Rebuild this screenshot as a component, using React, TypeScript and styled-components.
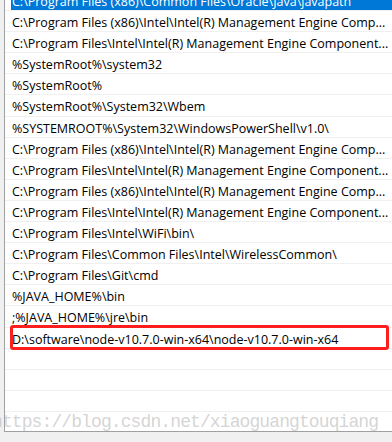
import React from 'react';
import styled, {createGlobalStyle} from "styled-components";

const paths = [
    "C:\\Program Files (x86)\\Common Files\\Oracle\\Java\\javapath",
    "C:\\Program Files (x86)\\Intel\\Intel(R) Management Engine Comp...",
    "C:\\Program Files\\Intel\\Intel(R) Management Engine Component...",
    "%SystemRoot%\\system32",
    "%SystemRoot%",
    "%SystemRoot%\\System32\\Wbem",
    "%SYSTEMROOT%\\System32\\WindowsPowerShell\\v1.0\\",
    "C:\\Program Files (x86)\\Intel\\Intel(R) Management Engine Comp...",
    "C:\\Program Files\\Intel\\Intel(R) Management Engine Component...",
    "C:\\Program Files (x86)\\Intel\\Intel(R) Management Engine Comp...",
    "C:\\Program Files\\Intel\\Intel(R) Management Engine Component...",
    "C:\\Program Files\\Intel\\WiFi\\bin\\",
    "C:\\Program Files\\Common Files\\Intel\\WirelessCommon\\",
    "C:\\Program Files\\Git\\cmd",
    "%JAVA_HOME%\\bin",
    ";%JAVA_HOME%\\jre\\bin",
    "D:\\software\\node-v10.7.0-win-x64\\node-v10.7.0-win-x64",
    "",
    "",
    "",
    "",
];

export default function App() {
    return (
        <>
            <GlobalStyle/>
            <Frame>
                <ListBox>
                    <List>
                        {paths.map((p, i) => (
                            <Row key={i} marked={i === 16}>
                                <Cell selected={i === 0}>{p}</Cell>
                            </Row>
                        ))}
                    </List>
                </ListBox>
                <Watermark>https://blog.csdn.net/xiaoguangtouqiang</Watermark>
            </Frame>
        </>
    );
}

const GlobalStyle = createGlobalStyle`
    body {
        margin: 0;
        background: #f0f0f0;
    }
`

const Frame = styled.div`
    position: relative;
    width: 392px;
    height: 442px;
    overflow: hidden;
    background: #f0f0f0;
`

const ListBox = styled.div`
    margin-left: 4px;
    height: 431px;
    background: #ffffff;
    border-left: 1px solid #a0a0a0;
    border-bottom: 1px solid #a0a0a0;
    overflow: hidden;
`

const List = styled.div`
    margin-top: -10px;
    display: flex;
    flex-direction: column;
`

const Row = styled.div<{ marked?: boolean }>`
    position: relative;
    height: 21.1px;
    flex: none;
    box-sizing: border-box;
    border-bottom: 1px solid #f0f0f0;
    padding-left: 6px;
    display: flex;

    ${p => p.marked && `
        &::after {
            content: "";
            position: absolute;
            left: 5px;
            right: 3px;
            top: -3px;
            bottom: -2px;
            border: 3px solid #ff1e1e;
            border-radius: 3px;
        }
    `}
`

const Cell = styled.div<{ selected?: boolean }>`
    flex: 1;
    padding-left: 1px;
    padding-top: 3px;
    font-family: "Open Sans", sans-serif;
    font-size: 12.5px;
    line-height: 17px;
    white-space: nowrap;
    overflow: hidden;
    color: ${p => p.selected ? '#ffffff' : '#000000'};
    background: ${p => p.selected ? '#0078d7' : 'transparent'};
`

const Watermark = styled.div`
    position: absolute;
    left: -8px;
    top: 413px;
    font-family: "Liberation Mono", monospace;
    font-size: 18px;
    line-height: 18px;
    letter-spacing: -0.9px;
    color: rgba(170, 170, 170, 0.5);
    white-space: nowrap;
    pointer-events: none;
`
